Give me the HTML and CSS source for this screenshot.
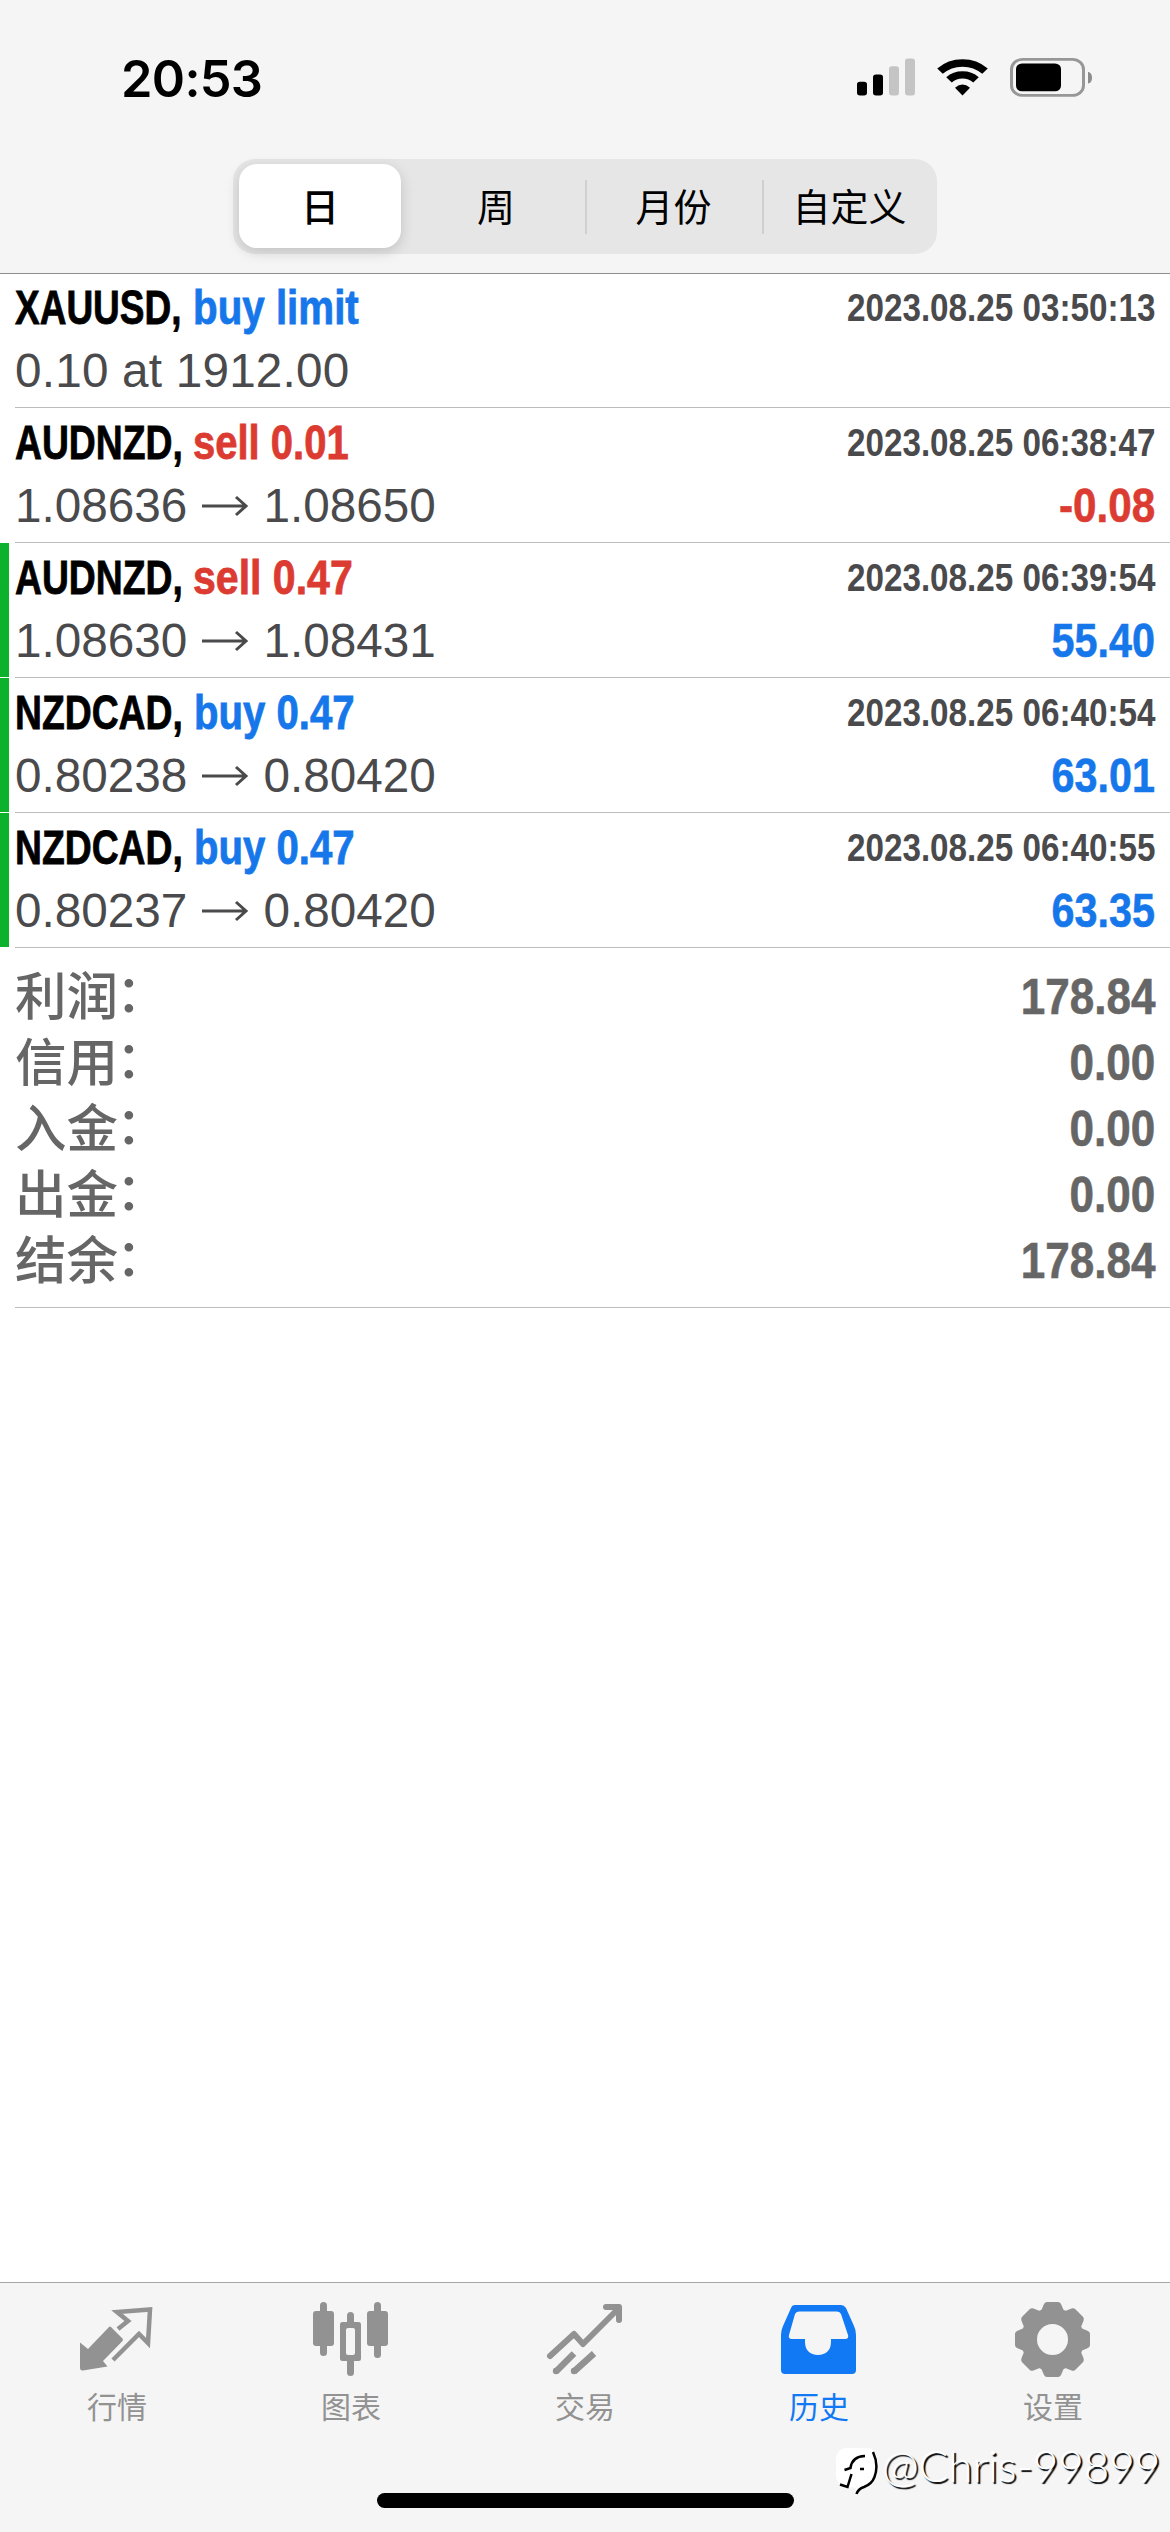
FILE: index.html
```html
<!DOCTYPE html>
<html lang="zh-CN">
<head>
<meta charset="utf-8">
<title>历史</title>
<link rel="stylesheet" href="styles.css">
</head>
<body>
<div class="screen">
  <header class="top">
    <div class="status">
      <span class="clock">20:53</span>
      <svg class="status-icons" width="240" height="42" viewBox="0 0 240 46" preserveAspectRatio="none">
        <rect x="1" y="26" width="10" height="15" rx="3"/>
        <rect x="17" y="18" width="10" height="23" rx="3"/>
        <g fill="#c4c4c4"><rect x="33" y="9" width="10" height="32" rx="3"/><rect x="49" y="0.5" width="10" height="40.500" rx="3"/></g>
        <g fill="none" stroke="#000" stroke-width="8"><path d="M84 14.500A32.500 32.500 0 0 1 129 14.500"/><path d="M93 24A19.500 19.500 0 0 1 120 24"/></g>
        <path d="M99 32.500Q106.500 25.500 114 32.500L106.500 41Z"/>
        <rect x="155.500" y="1.500" width="72" height="39.500" rx="11" fill="none" stroke="#979797" stroke-width="3"/>
        <rect x="160" y="6" width="45" height="30.500" rx="6"/>
        <path d="M232 15Q236 16 236 21.500T232 28Z" fill="#8c8c8c"/>
      </svg>
    </div>
    <nav class="segments">
      <span class="segment active">日</span>
      <span class="segment">周</span>
      <span class="segment ruled">月份</span>
      <span class="segment ruled">自定义</span>
    </nav>
  </header>

  <main>
    <section class="deals">
      <article class="deal">
        <div class="line"><b class="symbol xau">XAUUSD,</b><b class="side buy limit">buy limit</b><time>2023.08.25 03:50:13</time></div>
        <div class="line second"><span class="price order">0.10 at 1912.00</span></div>
      </article>
      <article class="deal">
        <div class="line"><b class="symbol">AUDNZD,</b><b class="side sell">sell 0.01</b><time>2023.08.25 06:38:47</time></div>
        <div class="line second"><span class="price">1.08636</span><svg class="arrow" viewBox="0 0 76 34"><path d="M15 17H58M49 8L59 17L49 26"/></svg><span class="price">1.08650</span><b class="profit sell">-0.08</b></div>
      </article>
      <article class="deal marked">
        <div class="line"><b class="symbol">AUDNZD,</b><b class="side sell wide">sell 0.47</b><time>2023.08.25 06:39:54</time></div>
        <div class="line second"><span class="price">1.08630</span><svg class="arrow" viewBox="0 0 76 34"><path d="M15 17H58M49 8L59 17L49 26"/></svg><span class="price">1.08431</span><b class="profit buy">55.40</b></div>
      </article>
      <article class="deal marked">
        <div class="line"><b class="symbol">NZDCAD,</b><b class="side buy long">buy 0.47</b><time>2023.08.25 06:40:54</time></div>
        <div class="line second"><span class="price">0.80238</span><svg class="arrow" viewBox="0 0 76 34"><path d="M15 17H58M49 8L59 17L49 26"/></svg><span class="price">0.80420</span><b class="profit buy">63.01</b></div>
      </article>
      <article class="deal marked">
        <div class="line"><b class="symbol">NZDCAD,</b><b class="side buy long">buy 0.47</b><time>2023.08.25 06:40:55</time></div>
        <div class="line second"><span class="price">0.80237</span><svg class="arrow" viewBox="0 0 76 34"><path d="M15 17H58M49 8L59 17L49 26"/></svg><span class="price">0.80420</span><b class="profit buy">63.35</b></div>
      </article>
    </section>
    <section class="totals">
      <div class="total"><span>利润<i>：</i></span><b>178.84</b></div>
      <div class="total"><span>信用<i>：</i></span><b>0.00</b></div>
      <div class="total"><span>入金<i>：</i></span><b>0.00</b></div>
      <div class="total"><span>出金<i>：</i></span><b>0.00</b></div>
      <div class="total"><span>结余<i>：</i></span><b>178.84</b></div>
    </section>
  </main>

  <footer class="tabbar">
    <nav class="tabs">
      <a class="tab"><svg viewBox="0 0 80 80"><path d="M3 36.500L11 43 32 21Q33 20 34 21L45.500 32.500Q46.500 34 45.500 35L26 55 30.500 60.500 6 64.500Q3 65 3 62Z" fill="currentColor"/><path d="M41 23L51 15 40 6 73 3.500 71 37 62 28 36 54" fill="none" stroke="currentColor" stroke-width="4.500"/></svg>行情</a>
      <a class="tab"><svg viewBox="0 0 80 80"><g fill="currentColor"><rect x="9" y="-4" width="7" height="54" rx="3.500"/><rect x="2" y="5" width="21" height="35" rx="3"/><rect x="63" y="-4" width="7" height="56" rx="3.500"/><rect x="56" y="5" width="21" height="35" rx="3"/><rect x="36" y="6" width="7" height="15" rx="3.500"/><rect x="36" y="50" width="7" height="20" rx="3.500"/><path fill-rule="evenodd" d="M31.500 16H47.500Q50 16 50 18.500V52.500Q50 55 47.500 55H31.500Q29 55 29 52.500V18.500Q29 16 31.500 16ZM35 24V47Q35 49 37 49H42Q44 49 44 47V24Q44 22 42 22H37Q35 22 35 24Z"/></g></svg>图表</a>
      <a class="tab"><svg viewBox="0 0 80 80"><g fill="none" stroke="currentColor" stroke-width="6" stroke-linecap="round" stroke-linejoin="round"><path d="M5 50L29 28 38 38 74 2M61 1H74V14"/></g><path d="M11 65.500L29 47.500M29 65.500L49 47.500" stroke="currentColor" stroke-width="6.500"/><circle cx="11" cy="65" r="3.200" fill="currentColor"/><circle cx="29" cy="65" r="3.200" fill="currentColor"/></svg>交易</a>
      <a class="tab current"><svg viewBox="0 0 80 80"><path fill="currentColor" fill-rule="evenodd" d="M16-1H62Q65-1 67 2L75 20Q77 24 77 29V64Q77 68 73 68H6Q2 68 2 64V29Q2 24 4 20L12 2Q13-1 16-1ZM20 5.500Q17 5.500 16 8L10 29Q9 33 13 33H26V36C26 44 31 49 39 49S52 44 52 36V33H66Q70 33 69 29L62 8Q61 5.500 58 5.500Z"/></svg>历史</a>
      <a class="tab"><svg viewBox="0 0 80 80"><g fill="currentColor"><path id="teeth" d="M31-2Q32-4 34-4H45Q47-4 48-2L51 5H28ZM31 69Q32 71 34 71H45Q47 71 48 69L51 62H28Z"/><use href="#teeth" transform="rotate(45 39.500 33.500)"/><use href="#teeth" transform="rotate(90 39.500 33.500)"/><use href="#teeth" transform="rotate(135 39.500 33.500)"/></g><circle cx="39.500" cy="33.500" r="23.500" fill="none" stroke="currentColor" stroke-width="16"/></svg>设置</a>
    </nav>
    <div class="home-indicator"></div>
  </footer>

  <div class="watermark">
    <svg width="44" height="48" viewBox="0 0 44 48"><path d="M12 0H30Q41 0 41 12V25Q41 37 30 39Q24 40 20 46V40L8 38Q0 36 0 27V12Q0 0 12 0Z" fill="#fff"/><path d="M37 4Q43 17 38.500 29Q36 36 28 39Q22 41 20.500 46M8.500 22L14.500 20Q16 8.500 29 8M15.500 26L11.500 39 4 36.500M24 21H28" fill="none" stroke="#000" stroke-width="2.500"/></svg>
    <span>@Chris-99899</span>
  </div>
</div>
</body>
</html>
```
FILE: styles.css
```css
* { box-sizing: border-box; }

body {
  margin: 0;
  background: #fff;
  font-family: "Liberation Sans", "Noto Sans CJK SC", sans-serif;
}

.screen {
  position: relative;
  display: flex;
  flex-direction: column;
  width: 1170px;
  height: 2532px;
  overflow: hidden;
  background: #fff;
}

/* Status bar and range switch */
.top {
  height: 274px;
  background: #f5f5f5;
  border-bottom: 1px solid #8e8e8e;
}

.status {
  display: flex;
  justify-content: space-between;
  height: 159px;
  padding: 58px 74px 0 121px;
}

.clock {
  font: 600 50.5px/41px Inter, sans-serif;
  letter-spacing: -0.7px;
}

.segments {
  display: grid;
  grid-template-columns: 174px 178px 177px 175px;
  width: 704px;
  height: 95px;
  margin: 0 auto;
  border-radius: 22px;
  background: #e6e6e7;
}

.segment {
  display: flex;
  align-items: center;
  justify-content: center;
  padding-bottom: 4px;
  font: 400 38px/60px "Noto Sans CJK SC", sans-serif;
  color: #000;
}

.segment.active {
  width: 162px;
  height: 84px;
  margin: 5px 6px;
  padding-bottom: 2px;
  border-radius: 18px;
  background: #fff;
  font-weight: 500;
  box-shadow: 0 4px 14px rgba(0, 0, 0, .16);
}

.segment.ruled {
  background: linear-gradient(#d0d0d2, #d0d0d2) left center / 2px 54px no-repeat;
}

/* Deal history */
.deals { margin-top: -1px; }

.deal {
  height: 135px;
  padding: 11px 15px 0 15px;
  background: linear-gradient(#bcbcbe, #bcbcbe) 15px 100% / 100% 1px no-repeat;
}

.deal.marked {
  background:
    linear-gradient(#bcbcbe, #bcbcbe) 15px 100% / 100% 1px no-repeat,
    linear-gradient(#0cb12c, #0cb12c) 0 0 / 9px 134px no-repeat;
}

.line {
  display: flex;
  height: 63px;
  align-items: flex-start;
  font-size: 47.5px;
  line-height: 48px;
  white-space: nowrap;
}

.symbol, .side {
  transform-origin: 0 0;
  -webkit-text-stroke: .8px currentColor;
}

.symbol {
  width: 178px;
  transform: scaleX(.785);
}

.symbol.xau { transform: scaleX(.779); }

.side { transform: scaleX(.842); }
.side.wide { transform: scaleX(.864); }
.side.long { margin-left: 1px; transform: scaleX(.845); }
.side.limit { transform: scaleX(.849); }

.buy { color: #1677ea; }
.sell { color: #dc3b32; }

.line time {
  margin-left: auto;
  font-size: 38.5px;
  font-weight: 700;
  color: #4a4a4c;
  transform: scaleX(.863);
  transform-origin: 100% 0;
}

.price {
  font-size: 47.7px;
  color: #4a4a4c;
}

.price.order { letter-spacing: .2px; }

.arrow {
  flex: none;
  width: 76px;
  height: 34px;
  margin-top: 7px;
  fill: none;
  stroke: #4a4a4c;
  stroke-width: 3;
}

.profit {
  margin-left: auto;
  transform: scaleX(.869);
  transform-origin: 100% 0;
  -webkit-text-stroke: .6px currentColor;
}

.profit.sell { transform: scaleX(.89); }

/* Totals */
.totals {
  height: 360px;
  margin-left: 15px;
  padding: 16px 15px 0 0;
  border-bottom: 1px solid #bcbcbe;
}

.total {
  display: flex;
  justify-content: space-between;
  height: 66px;
  line-height: 66px;
  color: #666;
}

.total span {
  font-size: 51.5px;
  font-weight: 500;
}

.total i {
  margin-left: -2px;
  font-style: normal;
  line-height: 1;
  vertical-align: 3px;
}

.total b {
  font-size: 49.5px;
  transform: scaleX(.89);
  transform-origin: 100% 0;
  -webkit-text-stroke: .6px currentColor;
}

/* Tab bar */
.tabbar {
  display: flex;
  flex-direction: column;
  align-items: center;
  justify-content: space-between;
  height: 250px;
  margin-top: auto;
  padding-bottom: 24px;
  background: #f5f5f5;
  border-top: 1px solid #a6a6a6;
}

.tabs {
  display: grid;
  grid-template-columns: repeat(5, 234px);
}

.tab {
  display: flex;
  flex-direction: column;
  align-items: center;
  padding-top: 23px;
  font: 400 30px/38px "Noto Sans CJK SC", sans-serif;
  color: #929292;
}

.tab.current { color: #1279f5; }

.tab svg {
  width: 80px;
  height: 80px;
  overflow: visible;
}

.home-indicator {
  width: 417px;
  height: 15px;
  border-radius: 8px;
  background: #000;
}

/* Watermark lies over the tab bar */
.watermark {
  position: absolute;
  left: 836px;
  top: 2448px;
  display: flex;
  gap: 2px;
  font: 300 44px/34px Lato, sans-serif;
  color: #fff;
  white-space: nowrap;
}

.watermark span { text-shadow: 2px 2px 1px #000; }
```
